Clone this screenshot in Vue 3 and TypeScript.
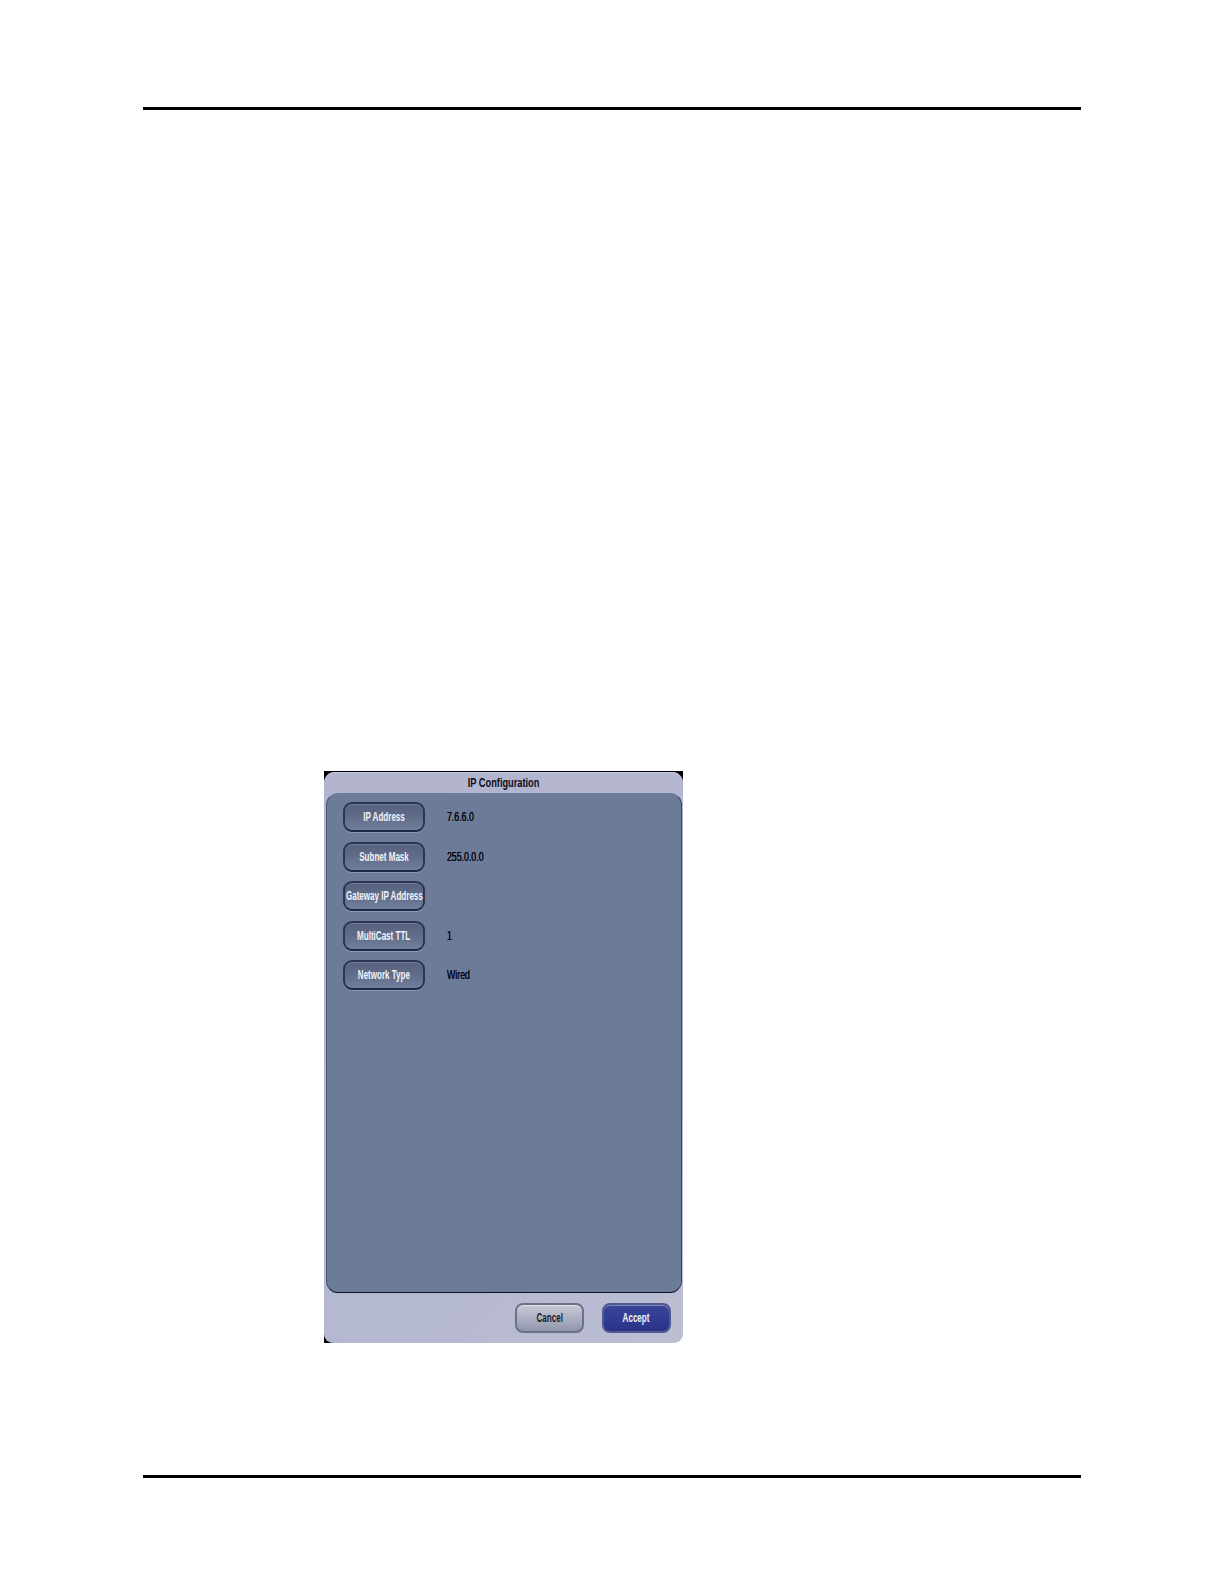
<script setup lang="ts">
interface Row { label: string; value: string }
const rows: Row[] = [
  { label: 'IP Address', value: '7.6.6.0' },
  { label: 'Subnet Mask', value: '255.0.0.0' },
  { label: 'Gateway IP Address', value: '' },
  { label: 'MultiCast TTL', value: '1' },
  { label: 'Network Type', value: 'Wired' },
]
</script>

<template>
  <div class="page">
    <div class="rule"></div>
    <div class="frame">
      <div class="dialog">
        <div class="title"><span class="narrow title-text">IP Configuration</span></div>
        <div class="panel">
          <div v-for="row in rows" :key="row.label" class="row">
            <button class="field-btn"><span class="narrow">{{ row.label }}</span></button>
            <span class="value"><span class="narrow value-text">{{ row.value }}</span></span>
          </div>
        </div>
        <div class="footer">
          <button class="act cancel"><span class="narrow">Cancel</span></button>
          <button class="act accept"><span class="narrow">Accept</span></button>
        </div>
      </div>
    </div>
    <div class="rule"></div>
  </div>
</template>

<style>
html, body { background: #fff; }
</style>

<style scoped>
.page {
  width: 1224px;
  height: 1584px;
  box-sizing: border-box;
  padding: 107px 0 0 143px;
  background: #fff;
  font-family: "Liberation Sans", Arial, sans-serif;
  overflow: hidden;
}
.rule {
  width: 938px;
  height: 3px;
  background: #000;
}
.frame {
  width: 359px;
  height: 572px;
  box-sizing: border-box;
  margin: 661px 0 132px 181px;
  padding-top: 1px;
  background:
    linear-gradient(#000, #000) 0 0 / 100% 20px no-repeat,
    linear-gradient(#000, #000) 0 100% / 12px 12px no-repeat,
    #fff;
}
.dialog {
  height: 100%;
  box-sizing: border-box;
  padding-top: 1px;
  display: flex;
  flex-direction: column;
  background: linear-gradient(135deg, #b1b4cc 0%, #b5b8d1 70%, #bcbfd2 100%);
  border-radius: 11px 11px 9px 9px;
  box-shadow: inset 0 1px 0 #c9cbdd;
}
.title {
  height: 20px;
  display: flex;
  align-items: center;
  justify-content: center;
  font-size: 12px;
  font-weight: 700;
  color: #0b0d16;
}
.narrow {
  display: inline-block;
  transform: scaleX(0.67);
  white-space: nowrap;
}
.title-text {
  transform: scaleX(0.77);
}
.panel {
  height: 500px;
  box-sizing: border-box;
  margin: 0 1px 0 2px;
  padding: 8px 0 0 16px;
  display: flex;
  flex-direction: column;
  gap: 9.5px;
  background: #6c7b97;
  border: 1px solid #6c7b97;
  border-bottom-color: #0c1120;
  border-left-color: #4a5570;
  border-right-color: #3a4359;
  border-radius: 12px;
}
.row {
  height: 30px;
  display: flex;
  align-items: center;
}
.field-btn {
  width: 82px;
  height: 30px;
  padding: 0;
  display: flex;
  align-items: center;
  justify-content: center;
  background: linear-gradient(180deg, #56627d 0%, #5f6b88 45%, #727f9b 100%);
  border: 2px solid #2a3550;
  border-bottom-color: #1f2a42;
  border-radius: 9px;
  box-shadow: 0 1px 0 #8c99b2, inset 0 1px 0 #707c97;
  color: #f1f3f8;
  font-family: inherit;
  font-size: 12px;
  font-weight: 700;
}
.value {
  margin-left: 22px;
  font-size: 12px;
  color: #05070d;
}
.value-text {
  transform: scaleX(0.73);
  transform-origin: left center;
  text-shadow: 0 0 0.5px #05070d;
}
.footer {
  flex: 1;
  display: flex;
  justify-content: flex-end;
  align-items: flex-start;
  gap: 18px;
  padding: 10px 12px 0 0;
}
.act {
  width: 69px;
  height: 30px;
  padding: 0;
  display: flex;
  align-items: center;
  justify-content: center;
  border-radius: 8px;
  font-family: inherit;
  font-size: 12px;
  font-weight: 700;
}
.cancel {
  background: linear-gradient(180deg, #c6c9d6 0%, #abafc1 55%, #8f94a9 100%);
  border: 2px solid #6a7189;
  box-shadow: inset 0 1px 0 #e0e2ea;
  color: #171b2c;
}
.accept {
  background: linear-gradient(180deg, #3a4599 0%, #303b93 55%, #2a3385 100%);
  border: 2px solid #4f598f;
  box-shadow: inset 0 1px 0 #8089c4;
  color: #f3f4fb;
}
</style>
